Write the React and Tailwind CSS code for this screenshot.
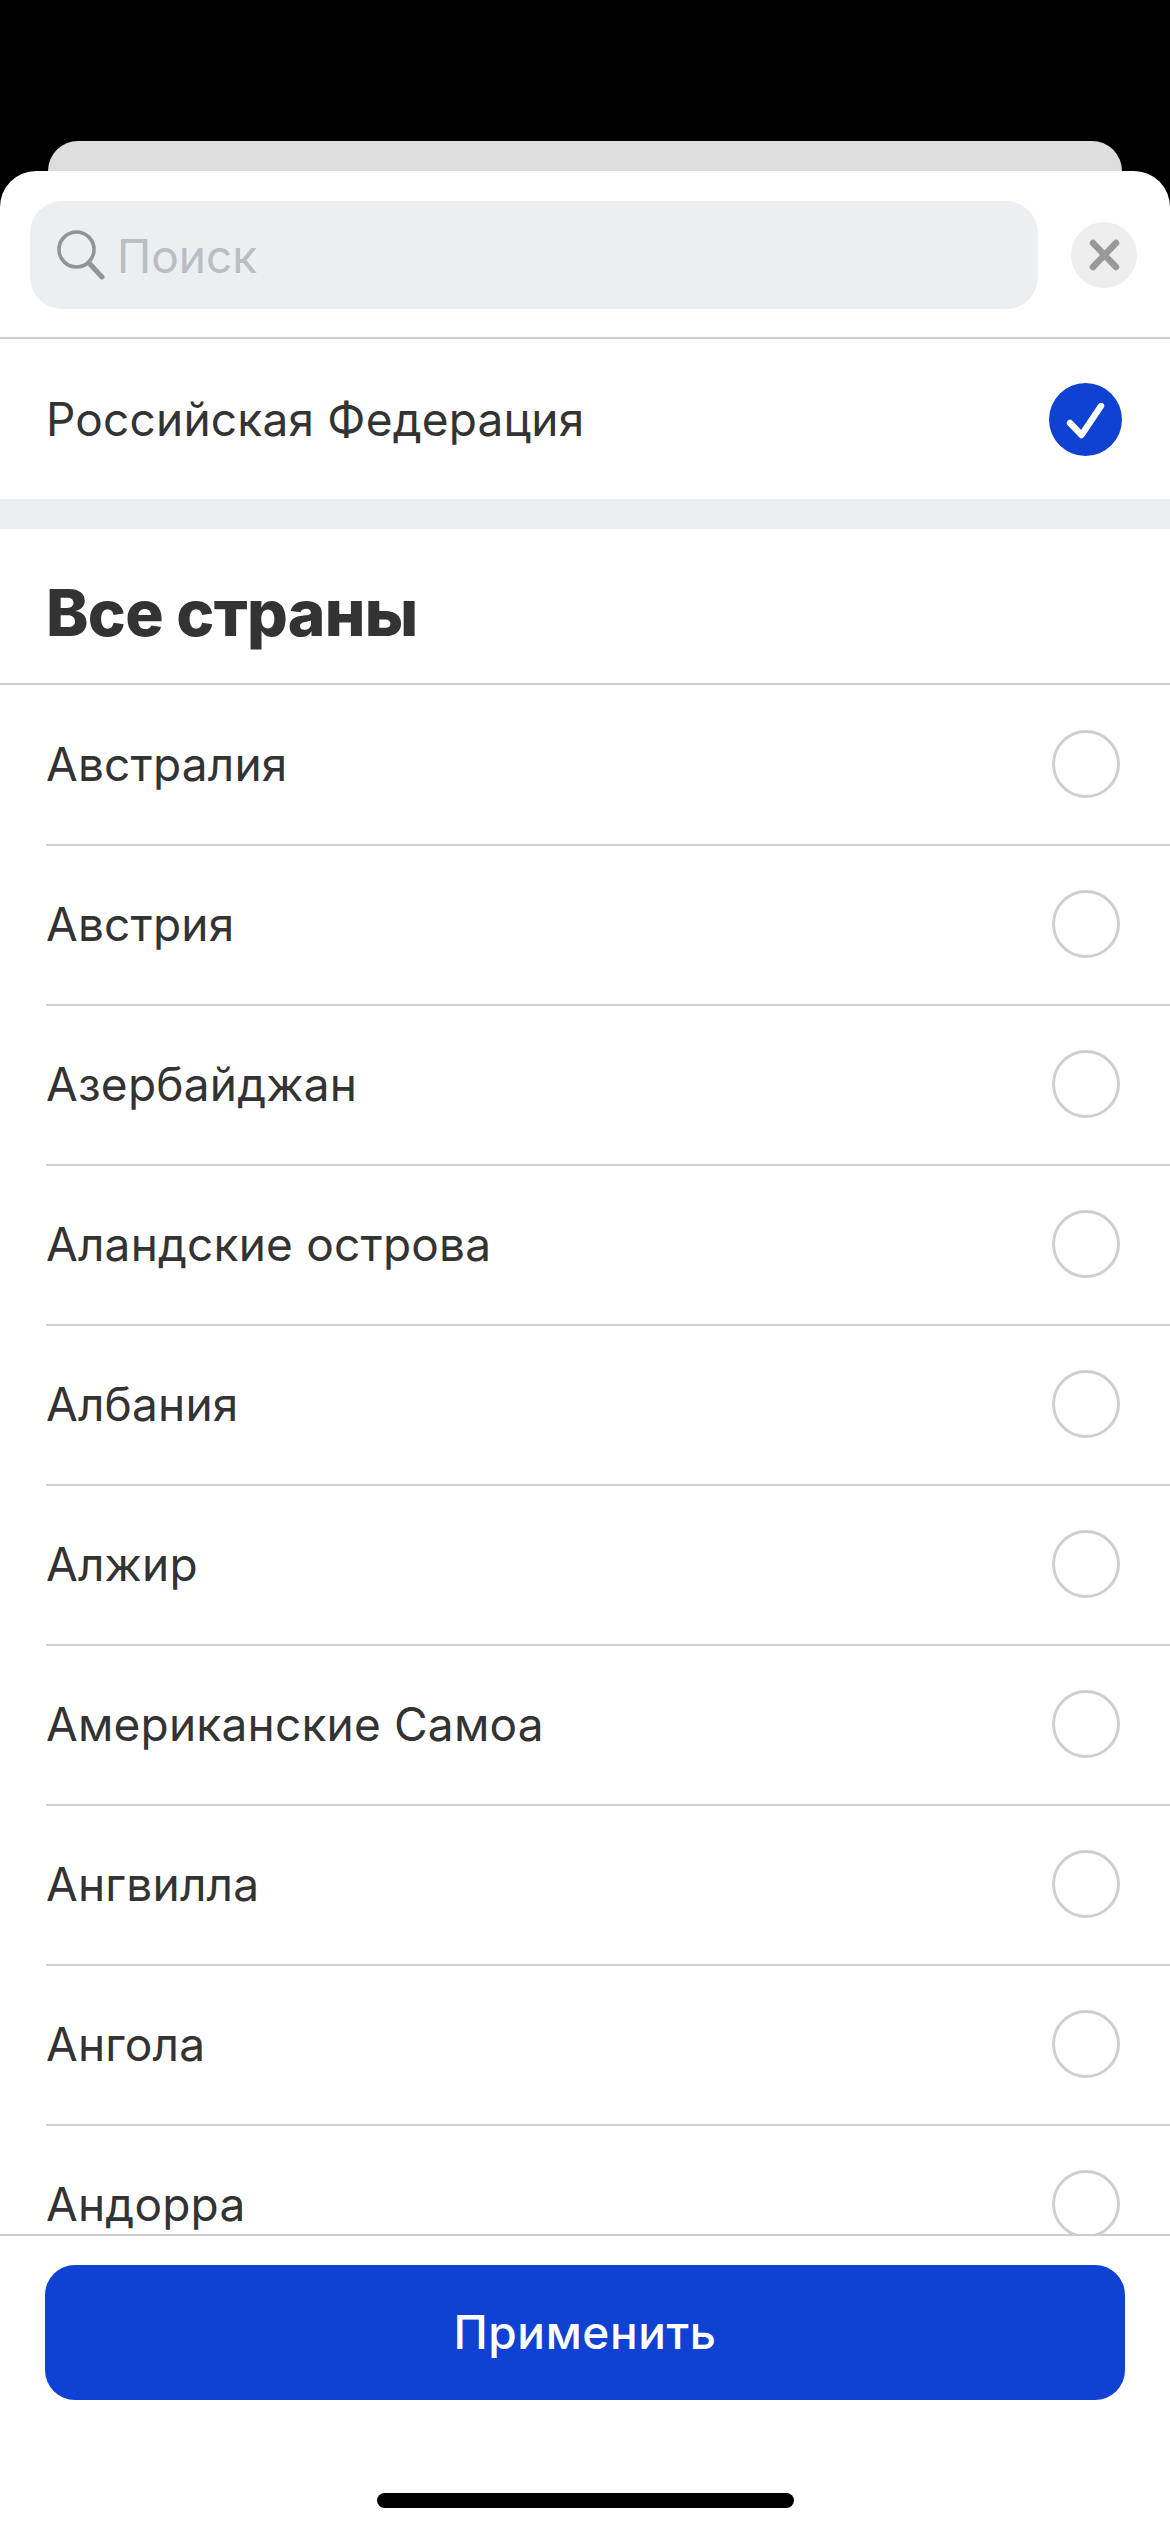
const font = { fontFamily: 'Inter, "Noto Sans", sans-serif' };
const countries = ["Австралия","Австрия","Азербайджан","Аландские острова","Албания","Алжир","Американские Самоа","Ангвилла","Ангола","Андорра"];

function SearchIcon() {
  return (
    <svg width="48" height="50" viewBox="0 0 48 50" fill="none" className="shrink-0">
      <circle cx="19.5" cy="19.5" r="17.5" stroke="#929395" strokeWidth="3.6" />
      <path d="M32 33 L45 47" stroke="#929395" strokeWidth="5" strokeLinecap="round" />
    </svg>
  );
}

function CloseButton() {
  return (
    <div className="w-[66px] h-[66px] rounded-full bg-[#efeeee] flex items-center justify-center shrink-0">
      <svg width="66" height="66" viewBox="0 0 66 66" fill="none">
        <path d="M22 21 L45 45 M45 21 L22 45" stroke="#999999" strokeWidth="6.5" strokeLinecap="round" />
      </svg>
    </div>
  );
}

function CheckedRadio() {
  return (
    <div className="w-[73px] h-[73px] rounded-full bg-[#0f41d2] shrink-0">
      <svg width="73" height="73" viewBox="0 0 73 73" fill="none">
        <path d="M21 40 L32.5 52 L52 23" stroke="#ffffff" strokeWidth="6.4" strokeLinecap="round" strokeLinejoin="round" />
      </svg>
    </div>
  );
}

function Row({ name }) {
  return (
    <div className="h-[160px] pl-[46px] shrink-0">
      <div className="h-full border-b-2 border-[#d0d0d0] flex items-center justify-between pr-[50px] pb-[2px]">
        <span className="text-[46px] leading-[60px] text-[#333333] tracking-[0.2px]">{name}</span>
        <div className="w-[68px] h-[68px] rounded-full border-[3px] border-[#cfcfd1] shrink-0" />
      </div>
    </div>
  );
}

export default function App() {
  return (
    <div className="w-[1170px] h-[2532px] bg-black flex flex-col overflow-hidden" style={font}>
      <div className="h-[171px] pt-[141px] pl-[48px] pr-[48px] shrink-0">
        <div className="h-[30px] bg-[#dedede] rounded-t-[32px]" />
      </div>
      <div className="flex-1 min-h-0 bg-white rounded-t-[36px] flex flex-col overflow-hidden">
        <div className="h-[168px] border-b-2 border-[#cccccc] pt-[30px] pl-[30px] pr-[33px] flex justify-between items-start shrink-0">
          <div className="w-[1008px] h-[108px] bg-[#ebeff2] rounded-[32px] flex items-center pl-[27px] gap-[12px]">
            <SearchIcon />
            <span className="text-[46px] leading-[60px] text-[#bbbdc0] mt-[2px]">Поиск</span>
          </div>
          <div className="mt-[21px]">
            <CloseButton />
          </div>
        </div>
        <div className="h-[160px] pl-[46px] pr-[48px] flex items-center justify-between shrink-0">
          <span className="text-[46px] leading-[60px] text-[#333333] tracking-[0.2px]">Российская Федерация</span>
          <CheckedRadio />
        </div>
        <div className="h-[30px] bg-[#ebeff2] shrink-0" />
        <div className="h-[156px] border-b-2 border-[#cccccc] pl-[46px] pt-[14px] flex items-center shrink-0">
          <h1 className="text-[64px] leading-[76px] font-extrabold text-[#333333] tracking-[-0.7px]">Все страны</h1>
        </div>
        <div className="flex-1 min-h-0 overflow-hidden flex flex-col pt-px">
          {countries.map((c) => <Row key={c} name={c} />)}
        </div>
        <div className="h-[298px] border-t-2 border-[#cccccc] pt-[29px] px-[45px] flex flex-col items-center shrink-0">
          <button className="w-full h-[135px] bg-[#0f41d2] rounded-[30px] text-white text-[46px] leading-[60px] font-medium tracking-[0.6px] pb-[2px] flex items-center justify-center">
            Применить
          </button>
          <div className="w-[417px] h-[15px] rounded-full bg-black mt-[93px]" />
        </div>
      </div>
    </div>
  );
}
